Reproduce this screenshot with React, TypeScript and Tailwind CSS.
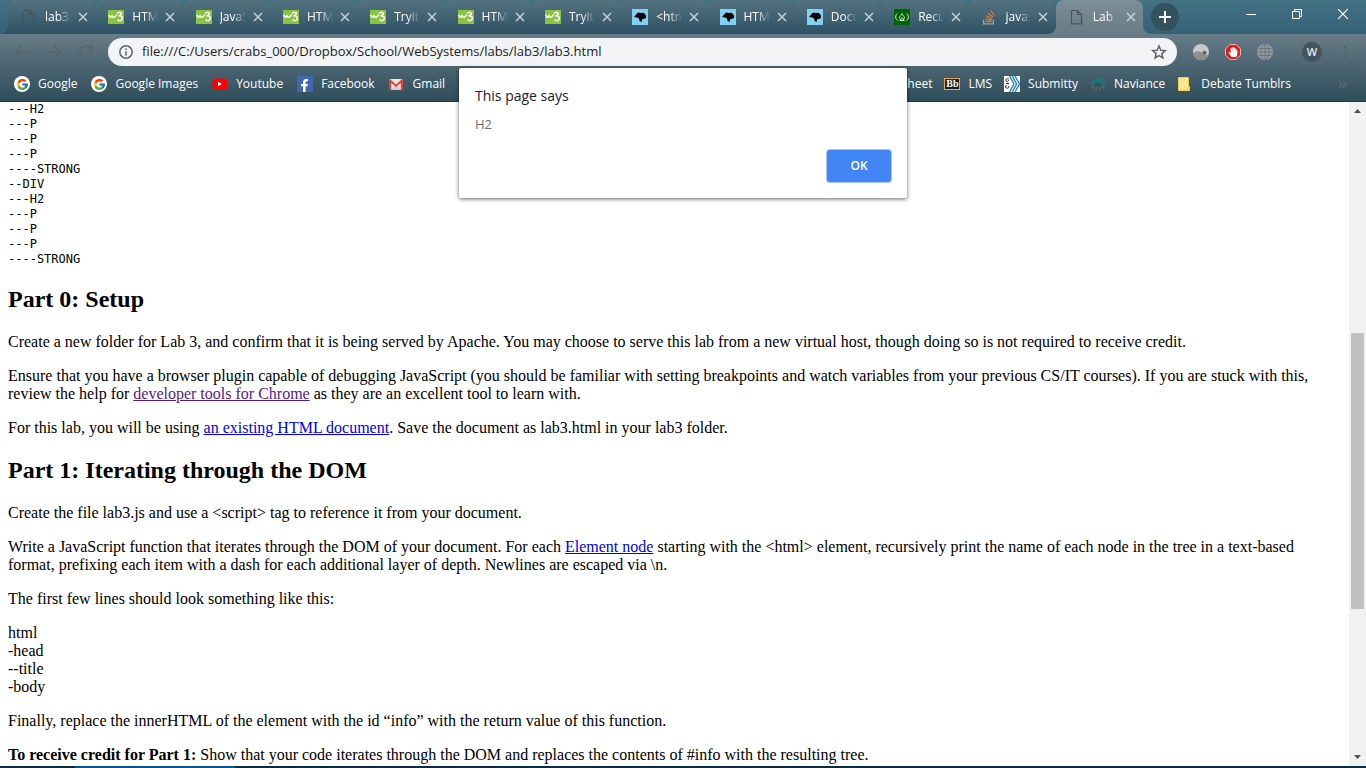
import React from "react";
import { FcGoogle } from "react-icons/fc";
import { FaFacebookF, FaHandPaper } from "react-icons/fa";

type IconName =
  | "page"
  | "w3"
  | "mdn"
  | "fcc"
  | "stack"
  | "google"
  | "youtube"
  | "facebook"
  | "gmail"
  | "bb"
  | "submitty"
  | "naviance"
  | "note";

function Icon({ name }: { name: IconName }) {
  switch (name) {
    case "page":
      return (
        <svg viewBox="0 0 16 16" className="size-4 shrink-0" fill="none" stroke="#4b545a" strokeWidth="1.2">
          <path d="M2.500 1.500h6l4 4v9.400h-10zM8.500 1.500v4h4" />
        </svg>
      );
    case "w3":
      return (
        <svg viewBox="0 0 16 16" className="size-4 shrink-0" fill="none" stroke="#fff" strokeWidth="1.500" strokeLinecap="round" strokeLinejoin="round">
          <path d="M0 1h16v14H0z" fill="#88c440" stroke="none" />
          <path d="M1 6.200c.2 2.600 2.500 2.700 3 .2c.3 2.500 3 2.600 4.300-.4" />
          <path d="M9.500 4c1.800-1.300 4.400-.6 3.700 1.100c-.4.9-1.300 1.400-2.400 1.700c3.200-.2 4.200 1.800 3.200 3.600c-1 1.600-3.200 1.700-4 .5" />
        </svg>
      );
    case "mdn":
      return (
        <svg viewBox="0 0 16 16" className="size-4 shrink-0">
          <path d="M0 0h16v16H0z" fill="#83d0f2" />
          <path d="M2 8l2-2.200l1-1.500l2-.8l1.500.4l2.500-.2l2.200 1.400l1 2.400l-.4 1.500l-1.600 1l-1.400-.3l-1 1.200l-.1 2l-1.700-.7l-.9-1.500l-.2-1.700l-2.200-.5z" fill="#000" />
        </svg>
      );
    case "fcc":
      return (
        <svg viewBox="0 0 16 16" className="size-4 shrink-0" fill="none" stroke="#d5e8d5" strokeWidth="1">
          <path d="M0 0h16v16H0z" fill="#006400" stroke="none" />
          <path d="M3.300 4.500c-2.200 2-2.200 5 0 7M12.700 4.500c2.200 2 2.200 5 0 7M5.500 11.500h5M8 4.500c.2 2 2.500 2.400 2.300 4.400c0 1-.6 1.800-1.300 2c.5-1-.3-1.400-.9-2.200c-.5.8-1.500 1.200-1 2.200c-2.600-1-1.500-3.200-.4-4.200c.8-.8 1.200-1.200 1.300-2.200z" />
        </svg>
      );
    case "stack":
      return (
        <svg viewBox="0 0 16 16" className="size-4 shrink-0" fill="none" strokeWidth="1.300">
          <path d="M2.500 10.500v4.300h9.800v-4.300" stroke="#9aa3a8" />
          <path d="M4.300 12.500h6.200M4.400 9.900l6.200 1.100M5.200 7l5.700 2.700M7 4.200l4.900 3.900M9.800 1.500l3.500 5" stroke="#dd7a30" />
        </svg>
      );
    case "google":
      return (
        <span className="flex size-4 shrink-0 items-center justify-center rounded-full bg-white">
          <FcGoogle size={13} />
        </span>
      );
    case "youtube":
      return (
        <svg viewBox="0 0 16 16" className="size-4 shrink-0">
          <rect x="0.500" y="2.500" width="14.500" height="11" rx="2.500" fill="#f00" />
          <path d="M6 5.800l4 2.200l-4 2.200z" fill="#fff" />
        </svg>
      );
    case "facebook":
      return (
        <span className="flex size-4 shrink-0 items-end justify-end bg-[#4267b2] pr-0.5">
          <FaFacebookF size={13} color="#fff" />
        </span>
      );
    case "gmail":
      return (
        <svg viewBox="0 0 16 16" className="size-4 shrink-0">
          <path d="M0 3h14v11H0z" fill="#e9e5e4" />
          <path d="M2 14l5-5.500l5 5.500z" fill="#d3cfce" />
          <path d="M0 14V3.500L1 3l6 5.500L13 3l1 .5V14h-2.200V6.700L7 11L2.200 6.700V14z" fill="#d9453a" />
        </svg>
      );
    case "bb":
      return (
        <span className="flex h-3 w-4 shrink-0 items-center justify-center border border-[#e8ae2c] bg-[#1d1d1d] font-['Liberation_Serif',serif] text-[10px] leading-none font-bold text-white">
          Bb
        </span>
      );
    case "submitty":
      return (
        <svg viewBox="0 0 16 16" className="size-4 shrink-0" fill="none">
          <path d="M0 0h16v16H0z" fill="#fff" />
          <path d="M5.500 0l4.500 8l-4.500 8M8.200 0l4.500 8l-4.500 8M11 0l4.500 8L11 16" stroke="#2f87bd" strokeWidth="1.500" />
          <path d="M4.800 3.200c-1.600-1.300-3.800.2-2.600 1.900c.8 1 2.600.6 2.200-.8M2 7.500h3M2.500 9c-1.600 1-1 3.200.8 3.300c1.600 0 2.200-1.800.9-2.600" stroke="#222" strokeWidth="1" />
        </svg>
      );
    case "naviance":
      return (
        <svg viewBox="0 0 16 16" className="size-4 shrink-0">
          <path d="M.5 9.500a7.500 7.500 0 1 1 15 0l-4.500-1.500l-3 .6l-3-.6z" fill="#1c7779" />
          <path d="M.8 10.500l4.500-1l-2.300 4.300zM4.500 15l2.500-5v5.600zM9 15.600V10l2.500 5zM13 13.800l-2.300-4.300l4.500 1z" fill="#5c6264" />
          <path d="M8 3.500l.5 4L11 5.500l-1.600 2.800l3.100.8l-4.500.4l-4.500-.4l3.100-.8L5 5.500l2.500 2z" fill="#304e59" />
        </svg>
      );
    case "note":
      return (
        <svg viewBox="0 0 16 16" className="size-4 shrink-0">
          <path d="M1.500 1.500h10v9h1v4h-11z" fill="#ffe591" stroke="#efcb4c" />
          <path d="M9.500 11.500h2.500v3H9.500z" fill="#f9da6b" />
        </svg>
      );
  }
}

const tabs: { icon: IconName; title: string; active?: boolean }[] = [
  { icon: "page", title: "lab3i" },
  { icon: "w3", title: "HTML" },
  { icon: "w3", title: "JavaS" },
  { icon: "w3", title: "HTML" },
  { icon: "w3", title: "Tryit" },
  { icon: "w3", title: "HTML" },
  { icon: "w3", title: "Tryit" },
  { icon: "mdn", title: "<htm" },
  { icon: "mdn", title: "HTML" },
  { icon: "mdn", title: "Docu" },
  { icon: "fcc", title: "Recu" },
  { icon: "stack", title: "javas" },
  { icon: "page", title: "Lab 3", active: true },
];

const leftBookmarks: { icon: IconName; label: string }[] = [
  { icon: "google", label: "Google" },
  { icon: "google", label: "Google Images" },
  { icon: "youtube", label: "Youtube" },
  { icon: "facebook", label: "Facebook" },
  { icon: "gmail", label: "Gmail" },
];

const rightBookmarks: { icon?: IconName; label: string }[] = [
  { label: "Sheet" },
  { icon: "bb", label: "LMS" },
  { icon: "submitty", label: "Submitty" },
  { icon: "naviance", label: "Naviance" },
  { icon: "note", label: "Debate Tumblrs" },
];

function Cross({ className }: { className: string }) {
  return (
    <svg viewBox="0 0 10 10" className={className} fill="none" stroke="currentColor">
      <path d="M1 1l8 8M9 1l-8 8" />
    </svg>
  );
}

/* Concave foot that joins a tab to the bar below it. */
function TabFoot({ side, fill }: { side: "left" | "right"; fill: string }) {
  return (
    <svg
      viewBox="0 0 8 8"
      className={side === "left" ? "absolute right-full bottom-0 size-2" : "absolute bottom-0 left-full size-2"}
      fill={fill}
    >
      <path d={side === "left" ? "M8 0v8H0a8 8 0 0 0 8-8z" : "M0 0v8h8a8 8 0 0 1-8-8z"} />
    </svg>
  );
}

function TabStrip() {
  return (
    <div className="flex h-[34px] bg-linear-to-b from-[#437184] to-[#366277]">
      <div className="flex min-w-0 flex-1 pl-2">
        {tabs.map((tab, i) => (
          <div
            key={i}
            className={
              tab.active
                ? "relative flex min-w-0 flex-1 items-center rounded-t-lg bg-linear-to-b from-[#7c8f98] to-[#687c87] pl-[13px]"
                : "relative flex min-w-0 flex-1 items-center rounded-t-lg bg-linear-to-b from-[#547380] to-[#2d5264] pl-[13px]"
            }
          >
            {i === 0 && <TabFoot side="left" fill="#2f5466" />}
            {tab.active && <TabFoot side="left" fill="#6a7e89" />}
            {tab.active && <TabFoot side="right" fill="#6a7e89" />}
            <Icon name={tab.icon} />
            <span className="ml-2 w-[26px] shrink-0 overflow-hidden mask-r-from-50% text-xs whitespace-nowrap text-white">{tab.title}</span>
            <button aria-label="Close tab" className="ml-1 flex size-4 shrink-0 items-center justify-center text-[#c5d1d7]">
              <Cross className="size-[10px] stroke-[1.5]" />
            </button>
            {!tab.active && i < 11 && <span className="-mr-0.5 ml-auto h-5 w-px bg-[#70868f]" />}
          </div>
        ))}
      </div>
      <div className="flex w-[223px] shrink-0 items-start">
        <button aria-label="New tab" className="mt-[3px] ml-2 flex size-7 items-center justify-center rounded-full bg-[#34515f]">
          <svg viewBox="0 0 12 12" className="size-3" stroke="#fff" strokeWidth="2">
            <path d="M6 0v12M0 6h12" />
          </svg>
        </button>
        <div className="ml-auto flex h-7 text-white">
          <button aria-label="Minimize" className="flex w-[46px] items-center justify-center">
            <span className="h-px w-[10px] bg-white" />
          </button>
          <button aria-label="Restore" className="flex w-[46px] items-center justify-center">
            <svg viewBox="0 0 10 10" className="size-[10px]" fill="none" stroke="currentColor">
              <path d="M.5 2.500h7v7h-7zM2.500 2.500v-2h7v7h-2" />
            </svg>
          </button>
          <button aria-label="Close" className="flex w-[46px] items-center justify-center">
            <Cross className="size-3" />
          </button>
        </div>
      </div>
    </div>
  );
}

function AddressRow() {
  return (
    <div className="flex h-9 items-center pl-2">
      <div className="flex w-[100px] shrink-0 gap-1 text-[#59666d]">
        <button aria-label="Back" className="flex size-7 items-center justify-center">
          <svg viewBox="0 0 16 16" className="size-4" fill="none" stroke="currentColor" strokeWidth="1.800">
            <path d="M15 8H2M8 1.500L1.500 8L8 14.500" />
          </svg>
        </button>
        <button aria-label="Forward" className="flex size-7 items-center justify-center">
          <svg viewBox="0 0 16 16" className="size-4" fill="none" stroke="currentColor" strokeWidth="1.800">
            <path d="M1 8h13M8 1.500L14.500 8L8 14.500" />
          </svg>
        </button>
        <button aria-label="Reload" className="flex size-7 items-center justify-center">
          <svg viewBox="0 0 16 16" className="size-4" fill="none" stroke="currentColor" strokeWidth="1.800">
            <path d="M13.500 10a6 6 0 1 1-1-5.800M14 1v5.500H8.500" />
          </svg>
        </button>
      </div>
      <div className="flex h-7 min-w-0 flex-1 items-center rounded-full bg-[#f1f3f4] pr-[10px] pl-[11px]">
        <svg viewBox="0 0 14 14" className="size-[14px] shrink-0" fill="none" stroke="#5f6368" strokeWidth="1.500">
          <circle cx="7" cy="7" r="6.200" />
          <path d="M7 6.200v4.300M7 3.500v1.600" />
        </svg>
        <input
          aria-label="Address"
          className="ml-[9px] min-w-0 flex-1 bg-transparent text-[13px] text-[#202124] outline-none"
          defaultValue="file:///C:/Users/crabs_000/Dropbox/School/WebSystems/labs/lab3/lab3.html"
        />
        <button aria-label="Bookmark this page">
          <svg viewBox="0 0 16 16" className="size-4" fill="none" stroke="#5f6368" strokeWidth="1.500">
            <path d="M8 2l1.800 4.200l4.500.4l-3.400 3l1 4.400L8 11.700L4.100 14l1-4.400l-3.400-3l4.500-.4z" />
          </svg>
        </button>
      </div>
      <div className="flex w-[189px] shrink-0 items-center pl-4">
        <svg viewBox="0 0 16 16" className="size-4">
          <circle cx="8" cy="8" r="8" fill="#c9c9c9" />
          <path d="M0 9.500c2-2 5-2.800 7.500-1.500l5 2.500l2.800.8A8 8 0 0 1 0 9.500z" fill="#8f8f8f" />
          <circle cx="11.500" cy="8.800" r="2" fill="#666" />
        </svg>
        <span className="relative ml-4 flex size-4 items-center justify-center">
          <svg viewBox="0 0 16 16" className="absolute inset-0">
            <path d="M4.900.5h6.200l4.400 4.400v6.200l-4.400 4.400H4.900L.5 11.100V4.900z" fill="#e01b1b" stroke="#e9b5b5" />
          </svg>
          <FaHandPaper size={10} color="#fff" className="relative" />
        </span>
        <svg viewBox="0 0 16 16" className="ml-4 size-4" fill="none" stroke="#68757c">
          <circle cx="8" cy="8" r="8" fill="#959da1" stroke="none" />
          <path d="M8 0v16M0 8h16M1.500 4.500h13M1.500 11.500h13" />
          <ellipse cx="8" cy="8" rx="4" ry="7.500" />
        </svg>
        <span className="ml-4 h-4 w-px bg-[#586a74]" />
        <button className="ml-3 flex size-5 items-center justify-center rounded-full bg-[#43545e] text-[11px] font-semibold text-[#e6eaec]">W</button>
        <button aria-label="Menu" className="ml-auto flex w-[42px] items-center justify-center">
          <svg viewBox="0 0 4 16" className="h-4 w-1" fill="#59616a">
            <circle cx="2" cy="3" r="1.500" />
            <circle cx="2" cy="8" r="1.500" />
            <circle cx="2" cy="13" r="1.500" />
          </svg>
        </button>
      </div>
    </div>
  );
}

function Bookmark({ icon, label }: { icon?: IconName; label: string }) {
  return (
    <a href="#" className="flex items-center gap-2 text-xs whitespace-nowrap text-white">
      {icon && <Icon name={icon} />}
      {label}
    </a>
  );
}

function BookmarkBar() {
  return (
    <nav className="flex h-7 items-center pl-[14px]">
      <div className="flex gap-[14px]">
        {leftBookmarks.map((b) => (
          <Bookmark key={b.label} {...b} />
        ))}
      </div>
      <div className="ml-auto flex gap-3">
        {rightBookmarks.map((b) => (
          <Bookmark key={b.label} {...b} />
        ))}
      </div>
      <button aria-label="More bookmarks" className="flex w-[75px] justify-end pr-[19px]">
        <svg viewBox="0 0 9 7" className="h-[7px] w-[9px]" fill="none" stroke="#5a6970" strokeWidth="1.500">
          <path d="M1 .5l3 3l-3 3M5 .5l3 3l-3 3" />
        </svg>
      </button>
    </nav>
  );
}

const tree = `---H2
---P
---P
---P
----STRONG
--DIV
---H2
---P
---P
---P
----STRONG`;

function Document() {
  return (
    <main className="min-w-0 flex-1 overflow-hidden bg-white px-2 font-['Liberation_Serif',serif] text-base leading-[18px] text-black">
      <pre className="font-['DejaVu_Sans_Mono',monospace] text-xs leading-[15px]">{tree}</pre>
      <h2 className="mt-[19px] mb-5 text-2xl leading-[27px] font-bold">Part 0: Setup</h2>
      <p className="my-4">
        Create a new folder for Lab 3, and confirm that it is being served by Apache. You may choose to serve this lab from a new virtual host,
        though doing so is not required to receive credit.
      </p>
      <p className="my-4">
        Ensure that you have a browser plugin capable of debugging JavaScript (you should be familiar with setting breakpoints and watch
        variables from your previous CS/IT courses). If you are stuck with this, review the help for{" "}
        <a href="#" className="text-[#551a8b] underline">developer tools for Chrome</a> as they are an excellent tool to learn with.
      </p>
      <p className="my-4">
        For this lab, you will be using{" "}
        <a href="#" className="text-[#0000ee] underline">an existing HTML document</a>. Save the document as lab3.html in your lab3 folder.
      </p>
      <h2 className="my-5 text-2xl leading-[27px] font-bold">Part 1: Iterating through the DOM</h2>
      <p className="my-4">Create the file lab3.js and use a &lt;script&gt; tag to reference it from your document.</p>
      <p className="my-4">
        Write a JavaScript function that iterates through the DOM of your document. For each{" "}
        <a href="#" className="text-[#0000ee] underline">Element node</a> starting with the &lt;html&gt; element, recursively print the name of
        each node in the tree in a text-based format, prefixing each item with a dash for each additional layer of depth. Newlines are escaped
        via \n.
      </p>
      <p className="my-4">The first few lines should look something like this:</p>
      <p className="my-4">
        html
        <br />
        -head
        <br />
        --title
        <br />
        -body
      </p>
      <p className="my-4">Finally, replace the innerHTML of the element with the id “info” with the return value of this function.</p>
      <p className="my-4">
        <strong>To receive credit for Part 1:</strong> Show that your code iterates through the DOM and replaces the contents of #info with the
        resulting tree.
      </p>
    </main>
  );
}

function Scrollbar() {
  return (
    <div className="flex w-[17px] shrink-0 flex-col items-center bg-[#f1f1f1]">
      <svg viewBox="0 0 17 17" className="size-[17px] shrink-0" fill="#505050">
        <path d="M5 11h7L8.500 7z" />
      </svg>
      <div className="flex w-full flex-1 flex-col items-center">
        <div className="basis-[214px]" />
        <div className="w-[13px] basis-[276px] bg-[#c1c1c1]" />
      </div>
      <svg viewBox="0 0 17 17" className="size-[17px] shrink-0" fill="#505050">
        <path d="M5 6h7L8.500 10z" />
      </svg>
    </div>
  );
}

function AlertDialog() {
  return (
    <div
      role="dialog"
      aria-labelledby="alert-title"
      className="absolute top-[68px] left-1/2 flex w-[448px] -translate-x-1/2 flex-col rounded-xs bg-white p-4 shadow-[0_1px_4px_rgba(0,0,0,0.6)]"
    >
      <h1 id="alert-title" className="mt-0.5 text-sm leading-5 text-[#202124]">This page says</h1>
      <p className="mt-2 text-[13px] leading-5 text-[#6b6f74]">H2</p>
      <button className="mt-4 h-8 w-16 self-end rounded-[3px] bg-[#4285f4] text-xs font-semibold text-white shadow-[0_0_0_1px_#a6c8fb]">OK</button>
    </div>
  );
}

export default function App() {
  return (
    <div className="relative flex h-screen flex-col overflow-hidden font-['Open_Sans','Noto_Sans',sans-serif]">
      <TabStrip />
      <div className="h-[68px] shrink-0 border-b border-[#203a47] bg-linear-to-b from-[#677c87] to-[#2f4d5b]">
        <AddressRow />
        <BookmarkBar />
      </div>
      <div className="flex min-h-0 flex-1">
        <Document />
        <Scrollbar />
      </div>
      <div className="flex h-0.5 shrink-0 bg-[#0b2a41] pl-[75px]">
        <span className="w-40 bg-[#0a5391]" />
      </div>
      <AlertDialog />
    </div>
  );
}
